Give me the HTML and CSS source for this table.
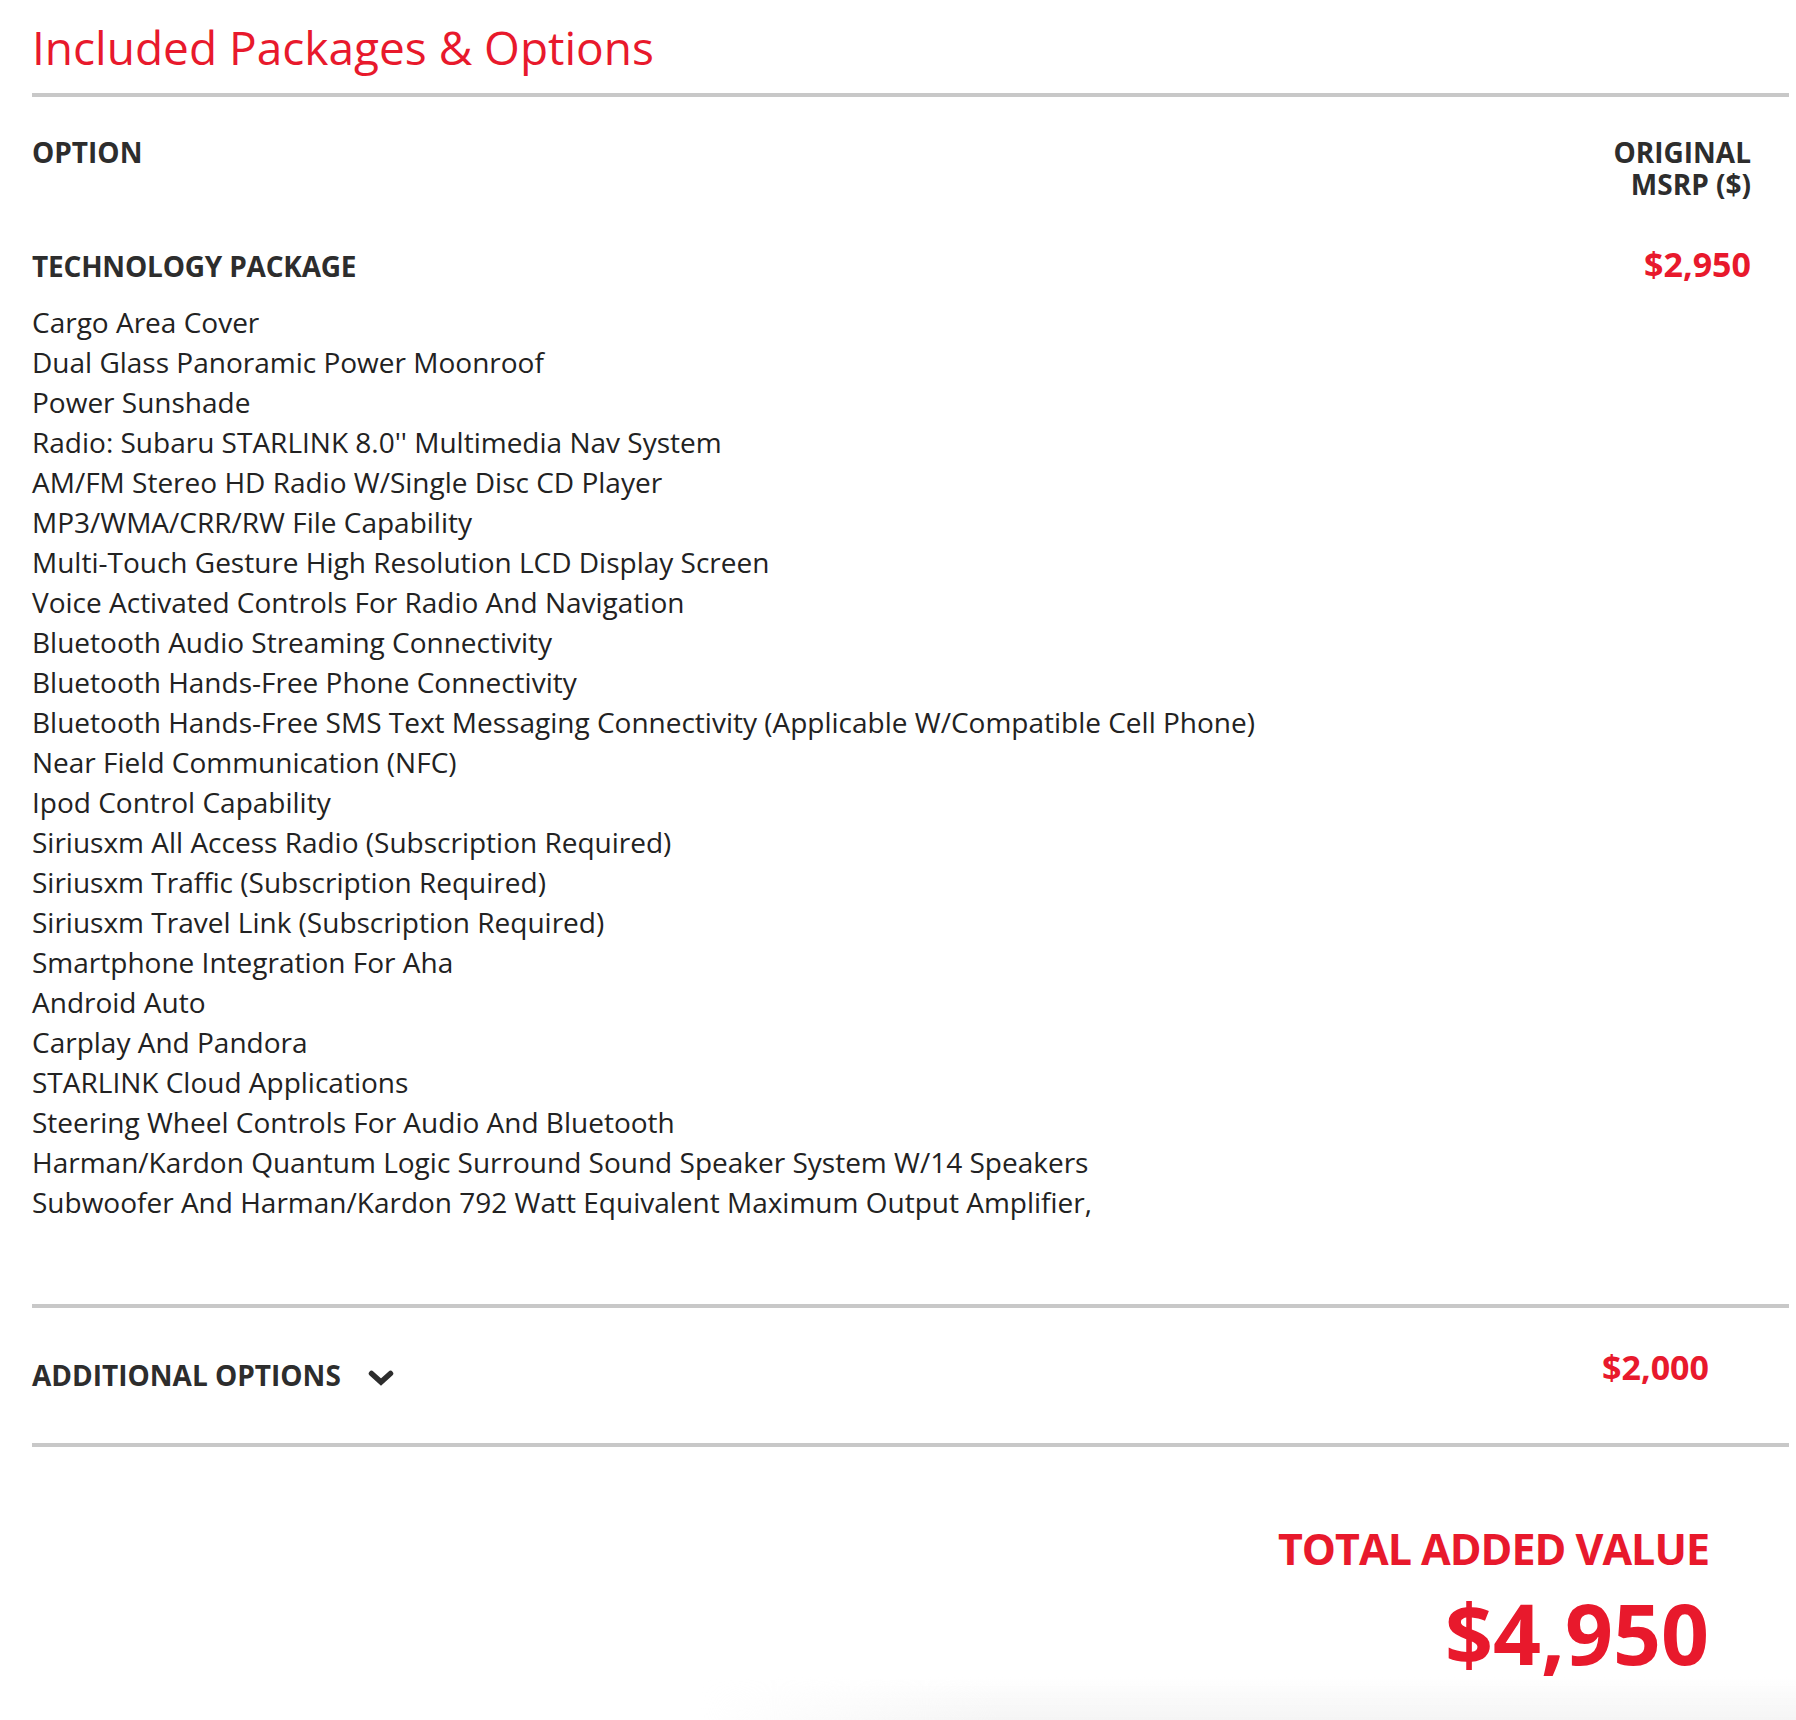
FILE: index.html
```html
<!DOCTYPE html>
<html lang="en">
<head>
<meta charset="utf-8">
<title>Included Packages &amp; Options</title>
<link rel="stylesheet" href="styles.css">
</head>
<body>
<div class="page">
  <h1 class="title">Included Packages &amp; Options</h1>
  <div class="rule"></div>

  <div class="head-row">
    <div class="col-label">OPTION</div>
    <div class="col-label col-right"><span class="hl">ORIGINAL</span><span class="hl">MSRP ($)</span></div>
  </div>

  <div class="pkg-row">
    <div class="pkg-name">TECHNOLOGY PACKAGE</div>
    <div class="price">$2,950</div>
  </div>

  <ul class="items">
    <li>Cargo Area Cover</li>
    <li>Dual Glass Panoramic Power Moonroof</li>
    <li>Power Sunshade</li>
    <li>Radio: Subaru STARLINK 8.0'' Multimedia Nav System</li>
    <li>AM/FM Stereo HD Radio W/Single Disc CD Player</li>
    <li>MP3/WMA/CRR/RW File Capability</li>
    <li>Multi-Touch Gesture High Resolution LCD Display Screen</li>
    <li>Voice Activated Controls For Radio And Navigation</li>
    <li>Bluetooth Audio Streaming Connectivity</li>
    <li>Bluetooth Hands-Free Phone Connectivity</li>
    <li>Bluetooth Hands-Free SMS Text Messaging Connectivity (Applicable W/Compatible Cell Phone)</li>
    <li>Near Field Communication (NFC)</li>
    <li>Ipod Control Capability</li>
    <li>Siriusxm All Access Radio (Subscription Required)</li>
    <li>Siriusxm Traffic (Subscription Required)</li>
    <li>Siriusxm Travel Link (Subscription Required)</li>
    <li>Smartphone Integration For Aha</li>
    <li>Android Auto</li>
    <li>Carplay And Pandora</li>
    <li>STARLINK Cloud Applications</li>
    <li>Steering Wheel Controls For Audio And Bluetooth</li>
    <li>Harman/Kardon Quantum Logic Surround Sound Speaker System W/14 Speakers</li>
    <li>Subwoofer And Harman/Kardon 792 Watt Equivalent Maximum Output Amplifier,</li>
  </ul>

  <div class="rule"></div>

  <div class="add-row">
    <div class="add-name">ADDITIONAL OPTIONS
      <svg class="chev" width="26" height="16" viewBox="0 0 26 16" aria-hidden="true">
        <polyline points="3.5,3.5 13,12 22.5,3.5" fill="none" stroke="#2d2d2d" stroke-width="5.5" stroke-linecap="round" stroke-linejoin="miter"/>
      </svg>
    </div>
    <div class="price">$2,000</div>
  </div>

  <div class="rule"></div>

  <div class="total">
    <div class="total-label">TOTAL ADDED VALUE</div>
    <div class="total-value">$4,950</div>
  </div>
</div>
<div class="fade"></div>
</body>
</html>
```

FILE: styles.css
```css
html, body {
  margin: 0;
  padding: 0;
  background: #ffffff;
}

body {
  font-family: "Open Sans", "Liberation Sans", sans-serif;
  color: #2d2d2d;
  overflow: hidden;
}

.page {
  padding: 0 7px 0 32px;
}

.title {
  margin: 0 0 13px 0;
  padding-top: 15px;
  font-size: 46px;
  line-height: 65px;
  font-weight: 400;
  color: #e8192c;
}

.rule {
  height: 4px;
  background: #c8c8c8;
}

.head-row {
  display: flex;
  justify-content: space-between;
  align-items: flex-start;
  padding: 39px 38px 0 0;
}

.col-label {
  font-size: 28px;
  line-height: 32px;
  font-weight: 700;
  color: #2d2d2d;
}

.col-right {
  display: flex;
  flex-direction: column;
  align-items: flex-end;
}

.hl {
  display: block;
  height: 32px;
  line-height: 32px;
}

.pkg-row {
  display: flex;
  justify-content: space-between;
  align-items: baseline;
  margin-top: 48px;
  padding-right: 38px;
}

.pkg-name {
  font-size: 28px;
  line-height: 32px;
  font-weight: 700;
  letter-spacing: -0.2px;
}

.price {
  font-size: 34px;
  line-height: 32px;
  font-weight: 700;
  color: #e8192c;
}

.items {
  list-style: none;
  margin: 20px 0 82px 0;
  padding: 0;
  font-size: 28px;
  line-height: 40px;
  color: #222222;
}

.add-row {
  display: flex;
  justify-content: space-between;
  align-items: flex-start;
  padding: 39px 80px 0 0;
  height: 96px;
}

.add-row .price {
  line-height: 40px;
}

.add-name {
  display: flex;
  align-items: center;
  margin-top: 8px;
  font-size: 28px;
  line-height: 40px;
  font-weight: 700;
}

.chev {
  margin-left: 27px;
  margin-top: 6px;
}

.total {
  display: flex;
  flex-direction: column;
  align-items: flex-end;
  padding: 78px 80px 0 0;
}

.total-label {
  font-size: 43px;
  line-height: 48px;
  font-weight: 700;
  letter-spacing: -1px;
  color: #e8192c;
}

.total-value {
  margin-top: 16px;
  font-size: 84px;
  line-height: 88px;
  font-weight: 700;
  color: #e8192c;
}

.fade {
  height: 43px;
  margin-left: 700px;
  background: linear-gradient(to bottom, rgba(240, 240, 240, 0), rgba(240, 240, 240, 0.7));
  -webkit-mask-image: linear-gradient(to right, transparent, #000 300px);
  mask-image: linear-gradient(to right, transparent, #000 300px);
}
```
